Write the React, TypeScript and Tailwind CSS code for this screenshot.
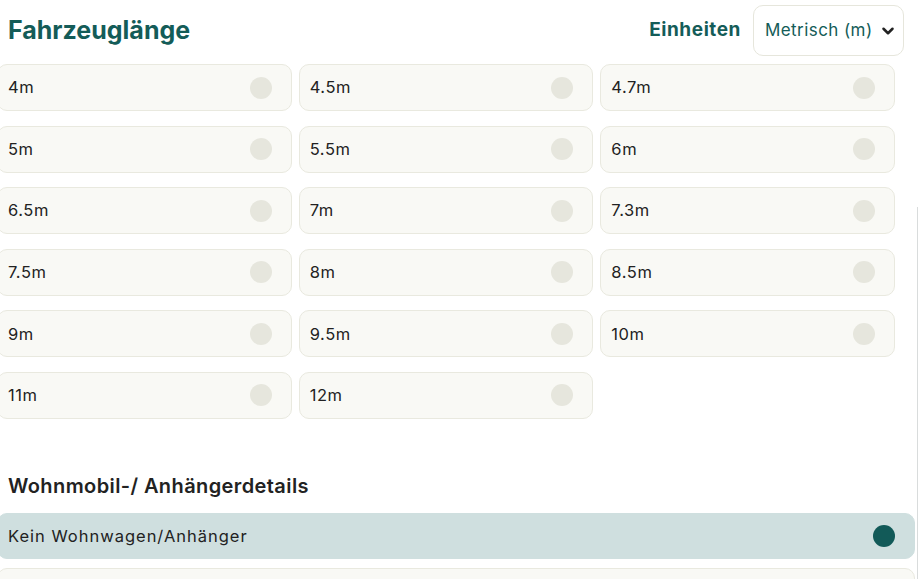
const lengths = ['4m', '4.5m', '4.7m', '5m', '5.5m', '6m', '6.5m', '7m', '7.3m', '7.5m', '8m', '8.5m', '9m', '9.5m', '10m', '11m', '12m']

function Option({ label, selected = false }: { label: string; selected?: boolean }) {
  return (
    <div
      className={
        'flex items-center justify-between rounded-[10px] border pl-[10px] pr-[19px] ' +
        (selected ? 'h-[46px] border-[#cfdfdf] bg-[#cfdfdf]' : 'h-[47px] border-[#e9e9df] bg-[#f9f9f5]')
      }
    >
      <span
        className={
          'text-[16.5px] text-[#222222] ' + (selected ? 'tracking-[0.06em]' : 'tracking-[0.035em]')
        }
      >
        {label}
      </span>
      <span className={'h-[22px] w-[22px] rounded-full ' + (selected ? 'bg-[#125a58]' : 'bg-[#e6e6dd]')} />
    </div>
  )
}

export default function App() {
  return (
    <div
      className="relative h-[579px] w-[918px] overflow-hidden bg-white"
      style={{ fontFamily: 'Inter, "Noto Sans", sans-serif' }}
    >
      <div className="absolute right-0 top-[207px] h-[372px] w-px bg-[#d9dcdc]" />
      <div className="flex h-[60px] items-center justify-between pl-[8px] pr-[14px] pt-[1px]">
        <h1 className="text-[25px] font-bold text-[#145c58]">Fahrzeuglänge</h1>
        <div className="flex items-center gap-[12px]">
          <span className="text-[19px] font-bold tracking-[0.03em] text-[#145c58]">Einheiten</span>
          <div className="flex h-[51px] w-[151px] items-center justify-between rounded-[10px] border border-[#e6e6dc] pl-[11px] pr-[6px]">
            <span className="text-[17px] tracking-[0.025em] text-[#145c58]">Metrisch (m)</span>
            <svg width="18" height="18" viewBox="0 0 24 24" fill="none" stroke="#222" strokeWidth="3.4" strokeLinecap="round" strokeLinejoin="round">
              <path d="M6 9l6 6 6-6" />
            </svg>
          </div>
        </div>
      </div>
      <div className="ml-[-3px] mt-[4px] grid w-[898px] grid-cols-3 gap-x-[7px] gap-y-[14.6px]">
        {lengths.map((l) => (
          <Option key={l} label={l} />
        ))}
      </div>
      <h2 className="ml-[8px] mt-[52px] text-[20px] font-semibold tracking-[0.02em] text-[#222222]">
        Wohnmobil-/ Anhängerdetails
      </h2>
      <div className="ml-[-3px] mt-[12px] w-[918px]">
        <Option label="Kein Wohnwagen/Anhänger" selected />
        <div className="mt-[9px] h-[46px] rounded-[10px] border border-[#e9e9df] bg-[#f9f9f5]" />
      </div>
    </div>
  )
}
